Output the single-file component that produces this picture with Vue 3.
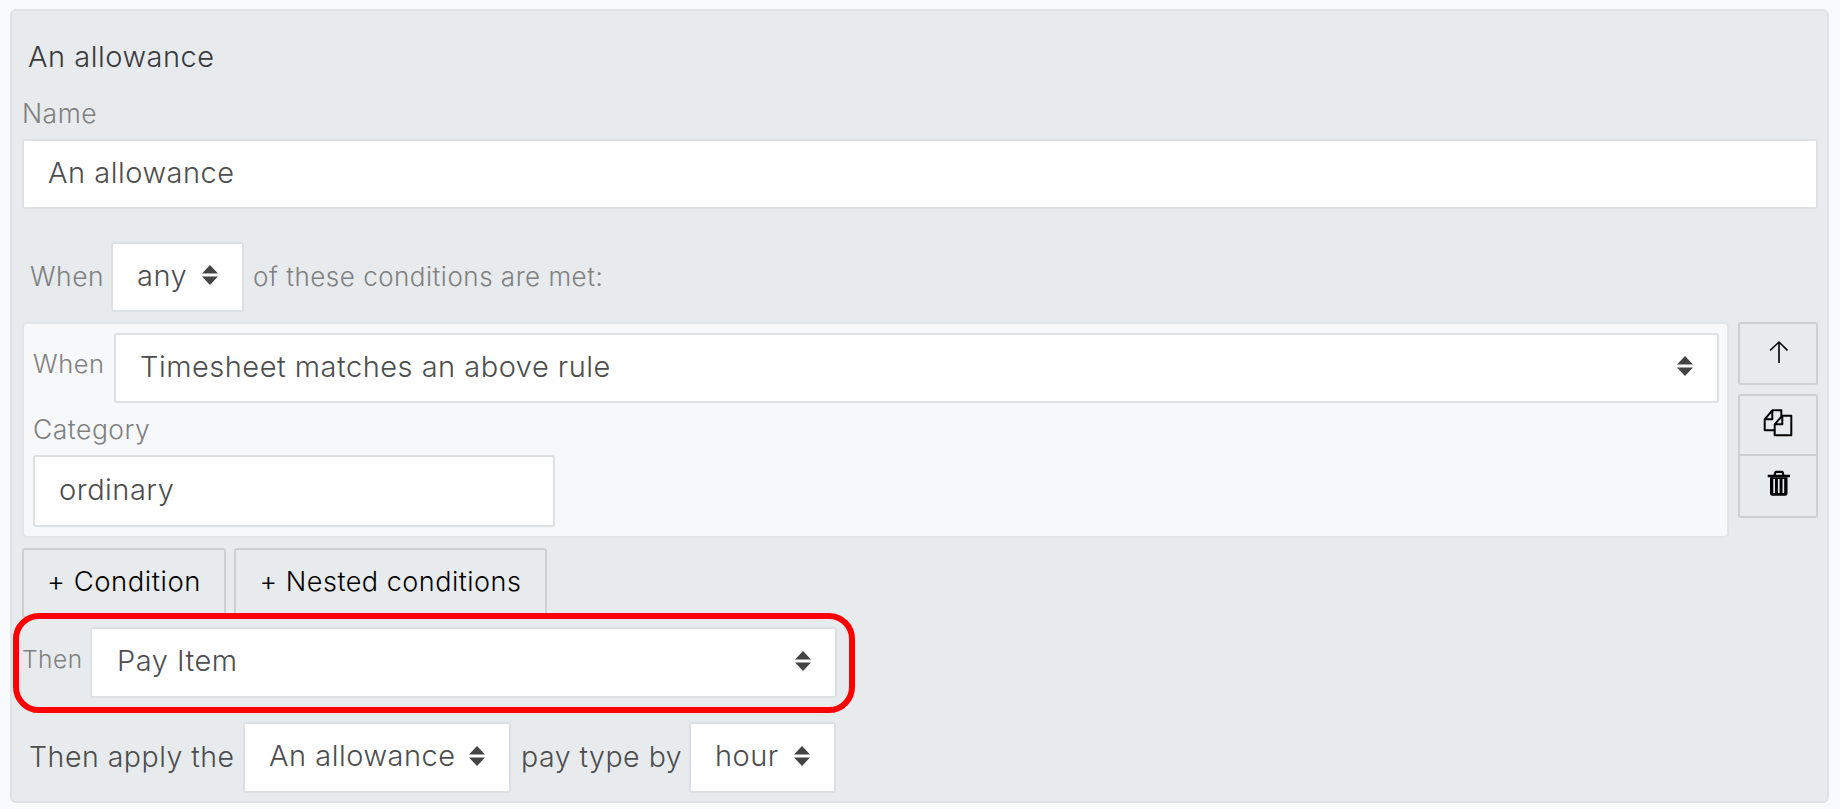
<script setup>
const title = 'An allowance'
</script>

<template>
  <div class="panel">
    <div class="title">{{ title }}</div>
    <div class="name-label muted">Name</div>
    <div class="box name-input">{{ title }}</div>

    <div class="row when-row">
      <span class="muted when-any">When</span>
      <div class="box select any-select">
        <span>any</span>
        <svg class="caret" viewBox="0 0 16 20"><path d="M8 0l8 8.500H0zM8 20l8-8.500H0z" /></svg>
      </div>
      <span class="muted when-tail">of these conditions are met:</span>
    </div>

    <div class="rule-row">
      <div class="rule">
        <div class="rule-when">
          <span class="muted rule-label">When</span>
          <div class="box select grow">
            <span>Timesheet matches an above rule</span>
            <svg class="caret" viewBox="0 0 16 20"><path d="M8 0l8 8.500H0zM8 20l8-8.500H0z" /></svg>
          </div>
        </div>
        <div class="category-label muted">Category</div>
        <div class="box category-input">ordinary</div>
      </div>

      <div class="rule-actions">
        <button class="btn icon-btn up-btn">
          <svg width="20" height="28" viewBox="0 0 20 28" fill="none" stroke="#000" stroke-width="1.600">
            <path d="M11 23V2M2 10.500L11 2l8.500 8.500" />
          </svg>
        </button>
        <div class="btn-group">
          <button class="btn icon-btn">
            <svg width="48" height="48" viewBox="0 0 48 48" fill="none" stroke="#000" stroke-width="2" stroke-linejoin="round">
              <path d="M27.300 15V9.300H18.300L10.700 18.300V29.300H20.700M18.300 9.300V18.300H10.700" />
              <path d="M20.700 23.300L28.300 14.700H37.300V34.300H20.700zM28.300 14.700V23.300H20.700" />
            </svg>
          </button>
          <button class="btn icon-btn">
            <svg width="48" height="48" viewBox="-1 2 48 48">
              <path d="M12.700 14.700H18.500L19.500 11.500Q20 10.800 21 10.800H27Q28 10.800 28.500 11.500L29.500 14.700H35V17.300H12.700zM20.800 14.700H27.200L26.700 13H21.300z" />
              <path fill-rule="evenodd" d="M15 17.300H32.500V33.500Q32.500 35.700 30.300 35.700H17.200Q15 35.700 15 33.500zM18.300 19V33H20V19zM22.900 19V33H24.600V19zM27.500 19V33H29.200V19z" />
            </svg>
          </button>
        </div>
      </div>
    </div>

    <div class="row add-row">
      <button class="btn add-btn">+ Condition</button>
      <button class="btn add-btn nested">+ Nested conditions</button>
    </div>

    <div class="row then-row">
      <span class="muted then-label">Then</span>
      <div class="box select grow">
        <span>Pay Item</span>
        <svg class="caret" viewBox="0 0 16 20"><path d="M8 0l8 8.500H0zM8 20l8-8.500H0z" /></svg>
      </div>
      <div class="highlight"></div>
    </div>

    <div class="row apply-row">
      <span class="apply-text first">Then apply the</span>
      <div class="box select pay-select">
        <span>An allowance</span>
        <svg class="caret" viewBox="0 0 16 20"><path d="M8 0l8 8.500H0zM8 20l8-8.500H0z" /></svg>
      </div>
      <span class="apply-text">pay type by</span>
      <div class="box select hour-select">
        <span>hour</span>
        <svg class="caret" viewBox="0 0 16 20"><path d="M8 0l8 8.500H0zM8 20l8-8.500H0z" /></svg>
      </div>
    </div>
  </div>
</template>

<style>
html, body {
  background: #f9fafb;
}
</style>

<style scoped>
.panel {
  box-sizing: border-box;
  width: 1819px;
  height: 794px;
  margin: 9px 0 0 10px;
  padding: 26px 9px 0 10px;
  background: #e8ebee;
  border: 2px solid #dfe2e6;
  border-radius: 6px;
  font-family: "Inter", sans-serif;
  font-weight: 300;
  font-size: 29px;
  letter-spacing: 0.5px;
  color: #4d4d4d;
}
.title {
  height: 39px;
  line-height: 40px;
  padding-left: 6px;
  color: #3a3a3a;
}
.name-label {
  height: 63px;
  padding-top: 17px;
  box-sizing: border-box;
  line-height: 40px;
  font-size: 26px;
}
.box {
  box-sizing: border-box;
  height: 70px;
  padding-bottom: 4px;
  background: #fff;
  border: 2px solid #dde0e3;
  border-radius: 3px;
  display: flex;
  align-items: center;
}
.name-input {
  padding-left: 24px;
}
.row {
  display: flex;
  align-items: center;
}
.muted {
  color: #808080;
  font-size: 26.500px;
}
.when-row {
  margin-top: 33px;
}
.when-any {
  width: 89px;
  padding: 0 0 2px 8px;
  box-sizing: border-box;
}
.when-tail {
  font-size: 26px;
  padding-bottom: 2px;
}
.select {
  justify-content: space-between;
  padding: 0 24px 4px 24px;
}
.caret {
  width: 16px;
  height: 20px;
  fill: #444;
  flex: none;
}
.grow {
  flex: 1;
}
.any-select {
  width: 133px;
  margin-right: 9px;
}
.rule-row {
  display: flex;
  align-items: flex-start;
  margin-top: 10px;
}
.rule {
  box-sizing: border-box;
  width: 1707px;
  height: 216px;
  padding: 9px 8px 0 9px;
  background: #f7f8fa;
  border: 2px solid #e1e4e8;
  border-radius: 5px;
}
.rule-when {
  display: flex;
  align-items: flex-start;
}
.rule-label {
  width: 81px;
  line-height: 62px;
  font-size: 25.500px;
}
.category-label {
  height: 52px;
  padding-top: 3px;
  box-sizing: border-box;
  line-height: 46px;
}
.category-input {
  width: 522px;
  height: 72px;
  padding-left: 24px;
}
.rule-actions {
  margin-left: 9px;
  width: 80px;
  display: flex;
  flex-direction: column;
  gap: 9px;
}
.btn {
  box-sizing: border-box;
  border: 2px solid #cdcfd1;
  border-radius: 3px;
  background: #e8ebee;
  font: inherit;
  font-size: 27.500px;
  letter-spacing: inherit;
  color: #000;
  padding: 0;
  display: flex;
  align-items: center;
  justify-content: center;
}
.icon-btn {
  width: 80px;
  height: 63px;
}
.btn-group {
  display: flex;
  flex-direction: column;
}
.btn-group .icon-btn:first-child {
  height: 62px;
  border-radius: 3px 3px 0 0;
}
.btn-group .icon-btn:last-child {
  height: 62px;
  border-top: 0;
  border-radius: 0 0 3px 3px;
}
.add-row {
  margin-top: 10px;
  gap: 8px;
}
.add-btn {
  width: 204px;
  height: 70px;
  padding-bottom: 4px;
}
.add-btn.nested {
  width: 313px;
  font-size: 27px;
}
.then-row {
  position: relative;
  width: 815px;
  margin-top: 9px;
}
.then-label {
  width: 68px;
  font-size: 24.500px;
  padding-bottom: 8px;
}
.then-row .box {
  height: 71px;
  padding-left: 25px;
}
.highlight {
  position: absolute;
  left: -9px;
  top: -14px;
  width: 842px;
  height: 100px;
  box-sizing: border-box;
  border: 6px solid #f00;
  border-radius: 26px;
}
.apply-row {
  width: 816px;
  margin-top: 24px;
}
.apply-row .box {
  height: 71px;
}
.apply-text {
  box-sizing: border-box;
  padding: 0 0 2px 7px;
  font-size: 28.500px;
  white-space: nowrap;
}
.apply-text.first {
  width: 222px;
}
.apply-text:not(.first) {
  width: 179px;
  padding-left: 10px;
}
.pay-select {
  width: 268px;
  margin-left: -1px;
}
.hour-select {
  width: 147px;
  margin-left: -1px;
}
</style>
